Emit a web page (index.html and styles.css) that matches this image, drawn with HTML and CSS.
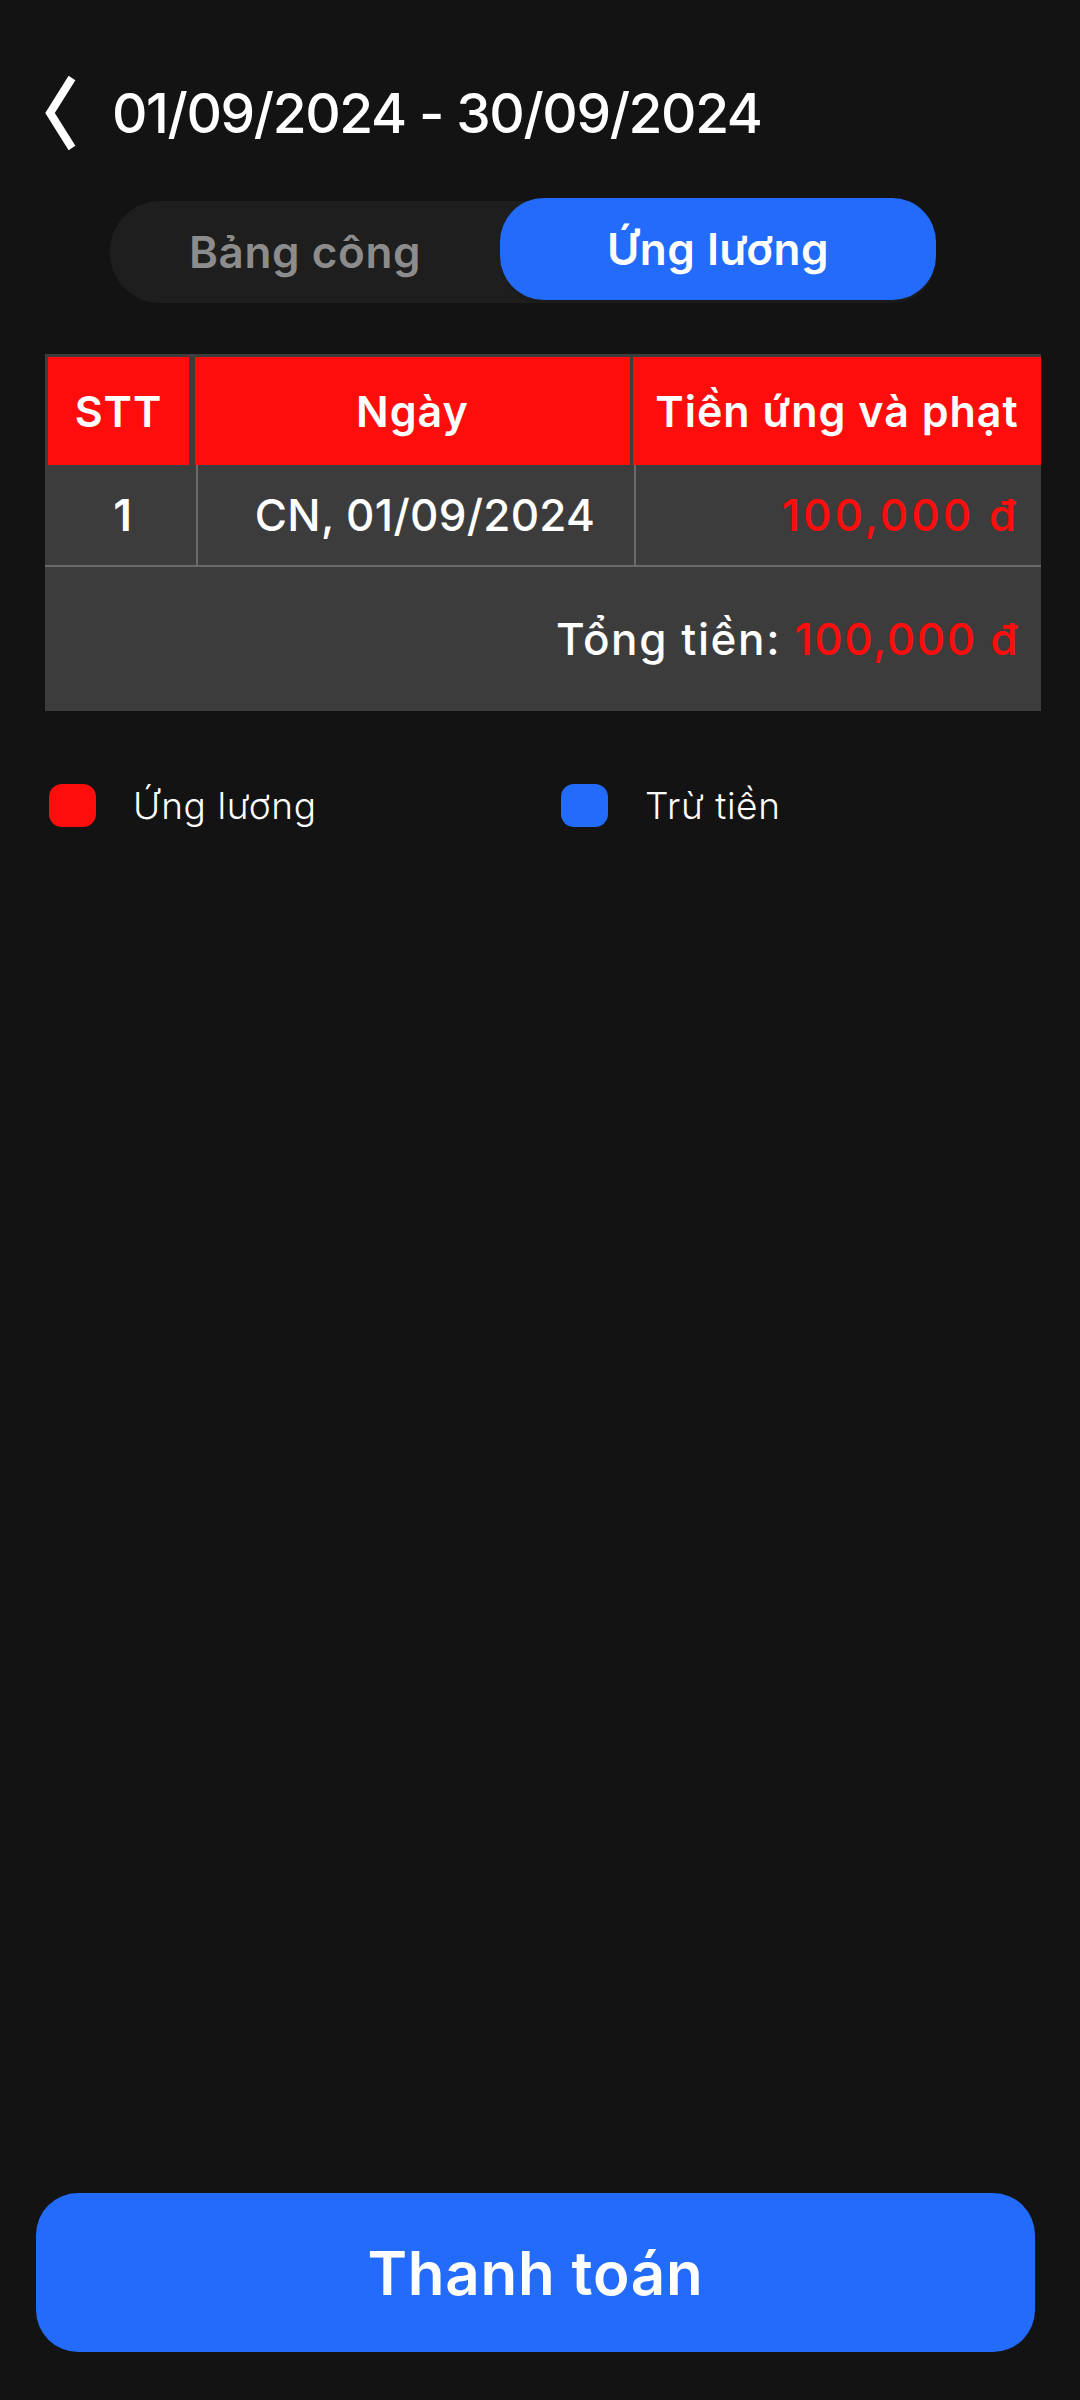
FILE: index.html
```html
<!DOCTYPE html>
<html lang="vi">
<head>
<meta charset="utf-8">
<title>Ứng lương</title>
<link rel="stylesheet" href="styles.css">
</head>
<body>
<div class="screen">
  <header class="topbar">
    <svg class="back" width="32" height="76" viewBox="0 0 32 76" aria-hidden="true">
      <polyline points="27,3 5,38 27,73" fill="none" stroke="#ffffff" stroke-width="8" stroke-linejoin="miter" stroke-miterlimit="10"/>
    </svg>
    <h1 class="title">01/09/2024 - 30/09/2024</h1>
  </header>

  <nav class="tabs">
    <div class="tab">Bảng công</div>
    <div class="tab tab-active">Ứng lương</div>
  </nav>

  <section class="table">
    <div class="thead">
      <div class="th th-stt">STT</div>
      <div class="th th-date">Ngày</div>
      <div class="th th-money">Tiền ứng và phạt</div>
    </div>
    <div class="trow">
      <div class="td td-stt">1</div>
      <div class="td td-date">CN, 01/09/2024</div>
      <div class="td td-money">100,000 đ</div>
    </div>
    <div class="total">Tổng tiền:&nbsp;<span class="red">100,000 đ</span></div>
  </section>

  <section class="legend">
    <div class="legend-item"><span class="swatch swatch-red"></span><span class="legend-label">Ứng lương</span></div>
    <div class="legend-item"><span class="swatch swatch-blue"></span><span class="legend-label">Trừ tiền</span></div>
  </section>

  <button class="pay">Thanh toán</button>
</div>
</body>
</html>
```

FILE: styles.css
```css
* { box-sizing: border-box; }
html, body { margin: 0; padding: 0; }
body {
  background: #131313;
  color: #ffffff;
  font-family: Inter, "Noto Sans", "Liberation Sans", sans-serif;
}
.screen {
  width: 1080px;
  height: 2400px;
  display: flex;
  flex-direction: column;
}
.topbar {
  display: flex;
  align-items: center;
  gap: 35px;
  padding: 75px 0 0 45px;
  height: 151px;
}
.back { display: block; flex: none; }
.title {
  margin: 0;
  font-size: 55px;
  font-weight: 500;
  letter-spacing: -1.4px;
  line-height: 1;
}
.tabs {
  margin: 50px 0 0 110px;
  width: 826px;
  height: 102px;
  background: #1e1e1e;
  border-radius: 50px;
  display: grid;
  grid-template-columns: 390px 436px;
}
.tab {
  display: flex;
  align-items: center;
  justify-content: center;
  font-size: 44px;
  font-weight: 600;
  letter-spacing: 0.6px;
  color: #8c8c8c;
}
.tab-active {
  background: #236cfb;
  color: #ffffff;
  border-radius: 44px;
  transform: translateY(-3px);
  box-shadow: 0 3px 0 #1b1b1b;
}
.table {
  margin: 51px 0 0 45px;
  width: 996px;
  background: #3c3c3c;
}
.thead {
  display: flex;
  padding: 3px 0 0 3px;
}
.th {
  background: #ff0d0d;
  height: 108px;
  display: flex;
  align-items: center;
  justify-content: center;
  font-size: 43px;
  font-weight: 600;
  letter-spacing: 1px;
}
.th-stt { width: 141px; }
.th-date { width: 435px; margin-left: 6px; }
.th-money { flex: 1; margin-left: 3px; }
.trow {
  display: grid;
  grid-template-columns: 153px 438px 1fr;
  height: 102px;
  border-bottom: 2px solid #6a6a6a;
}
.td {
  display: flex;
  align-items: center;
  font-size: 44px;
  font-weight: 500;
}
.td-stt {
  justify-content: center;
  font-weight: 600;
  border-right: 2px solid #6a6a6a;
  padding-left: 4px;
}
.td-date {
  justify-content: center;
  border-right: 2px solid #6a6a6a;
  padding-left: 18px;
  letter-spacing: 0.3px;
}
.td-money {
  justify-content: flex-end;
  padding-right: 22px;
  color: #ff0d0d;
  letter-spacing: 3px;
}
.total {
  height: 144px;
  display: flex;
  align-items: center;
  justify-content: flex-end;
  padding-right: 22px;
  font-size: 44px;
  font-weight: 500;
  letter-spacing: 1.6px;
}
.red { color: #ff0d0d; }
.legend {
  margin: 72px 0 0 49px;
  display: grid;
  grid-template-columns: 512px 1fr;
}
.legend-item {
  display: flex;
  align-items: center;
  gap: 37px;
}
.swatch {
  display: block;
  width: 47px;
  height: 43px;
  border-radius: 13px;
}
.swatch-red { background: #ff0d0d; }
.swatch-blue { background: #236cfb; }
.legend-label {
  font-size: 37px;
  font-weight: 300;
  letter-spacing: 0.6px;
}
.pay {
  margin: auto 0 48px 36px;
  width: 999px;
  height: 159px;
  border: none;
  border-radius: 42px;
  background: #236cfb;
  color: #ffffff;
  font-family: Inter, "Noto Sans", "Liberation Sans", sans-serif;
  font-size: 60px;
  font-weight: 600;
  letter-spacing: 0.8px;
}
```
